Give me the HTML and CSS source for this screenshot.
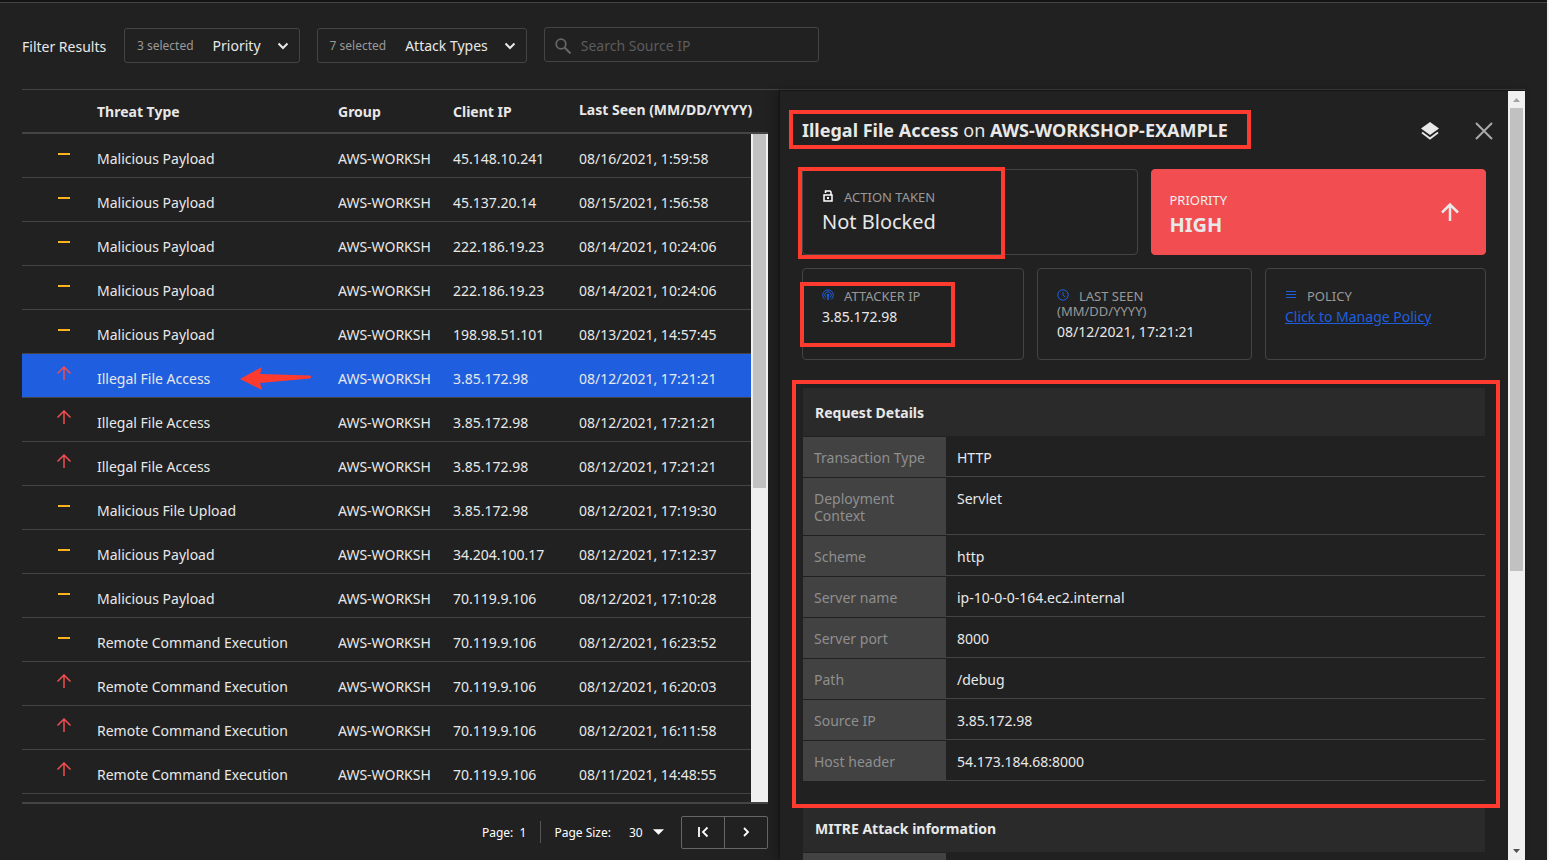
FILE: index.html
```html
<!DOCTYPE html>
<html lang="en">
<head>
  <meta charset="UTF-8">
  <meta name="viewport" content="width=device-width, initial-scale=1.0">
  <title>Threat Events</title>
  <link rel="stylesheet" href="styles.css">
</head>
<body>
  <!-- Shared icons -->
  <svg class="sprite" aria-hidden="true">
    <symbol id="icon-up" viewBox="0 0 16 16">
      <path d="M8 14V1M1.500 7.500L8 1l6.500 6.500" fill="none" stroke="currentColor" stroke-width="1.500"/>
    </symbol>
    <symbol id="icon-dash" viewBox="0 0 16 16">
      <path d="M2 8h12" stroke="currentColor" stroke-width="2"/>
    </symbol>
    <symbol id="icon-chevron" viewBox="0 0 12 12">
      <path d="M1.500 3.500L6 8l4.500-4.500" fill="none" stroke="currentColor" stroke-width="2"/>
    </symbol>
  </svg>

  <div class="page">
    <div class="filters">
      <span class="filters-title">Filter Results</span>
      <button class="dropdown" type="button">
        <span class="count">3 selected</span>
        <span>Priority</span>
        <svg class="chevron"><use href="#icon-chevron"/></svg>
      </button>
      <button class="dropdown" type="button">
        <span class="count">7 selected</span>
        <span>Attack Types</span>
        <svg class="chevron"><use href="#icon-chevron"/></svg>
      </button>
      <label class="search">
        <svg class="search-icon" viewBox="0 0 16 16"><circle cx="6" cy="6" r="4.800" fill="none" stroke="currentColor" stroke-width="1.800"/><path d="M9.500 9.500l6 6" stroke="currentColor" stroke-width="2"/></svg>
        <input type="text" placeholder="Search Source IP" aria-label="Search Source IP">
      </label>
    </div>

    <div class="content">
      <section class="events">
        <div class="events-list">
          <table class="events-table">
            <colgroup>
              <col class="col-icon">
              <col>
              <col class="col-group">
              <col class="col-client">
              <col class="col-seen">
            </colgroup>
            <thead>
              <tr>
                <th></th>
                <th>Threat Type</th>
                <th>Group</th>
                <th>Client IP</th>
                <th class="seen">Last Seen (MM/DD/YYYY)</th>
              </tr>
            </thead>
            <tbody>
              <tr>
                <td class="level medium"><svg><use href="#icon-dash"/></svg></td>
                <td>Malicious Payload</td><td><div class="clip">AWS-WORKSH</div></td><td>45.148.10.241</td><td>08/16/2021, 1:59:58</td>
              </tr>
              <tr>
                <td class="level medium"><svg><use href="#icon-dash"/></svg></td>
                <td>Malicious Payload</td><td><div class="clip">AWS-WORKSH</div></td><td>45.137.20.14</td><td>08/15/2021, 1:56:58</td>
              </tr>
              <tr>
                <td class="level medium"><svg><use href="#icon-dash"/></svg></td>
                <td>Malicious Payload</td><td><div class="clip">AWS-WORKSH</div></td><td>222.186.19.23</td><td>08/14/2021, 10:24:06</td>
              </tr>
              <tr>
                <td class="level medium"><svg><use href="#icon-dash"/></svg></td>
                <td>Malicious Payload</td><td><div class="clip">AWS-WORKSH</div></td><td>222.186.19.23</td><td>08/14/2021, 10:24:06</td>
              </tr>
              <tr>
                <td class="level medium"><svg><use href="#icon-dash"/></svg></td>
                <td>Malicious Payload</td><td><div class="clip">AWS-WORKSH</div></td><td>198.98.51.101</td><td>08/13/2021, 14:57:45</td>
              </tr>
              <tr class="selected">
                <td class="level high"><svg><use href="#icon-up"/></svg></td>
                <td class="pointed">Illegal File Access
                  <svg class="pointer" viewBox="0 0 72 24"><path d="M0 12L22 0l-2 7 50 1.500q2 1.500 0 3L20 16l2 7z" fill="currentColor"/></svg>
                </td><td><div class="clip">AWS-WORKSH</div></td><td>3.85.172.98</td><td>08/12/2021, 17:21:21</td>
              </tr>
              <tr>
                <td class="level high"><svg><use href="#icon-up"/></svg></td>
                <td>Illegal File Access</td><td><div class="clip">AWS-WORKSH</div></td><td>3.85.172.98</td><td>08/12/2021, 17:21:21</td>
              </tr>
              <tr>
                <td class="level high"><svg><use href="#icon-up"/></svg></td>
                <td>Illegal File Access</td><td><div class="clip">AWS-WORKSH</div></td><td>3.85.172.98</td><td>08/12/2021, 17:21:21</td>
              </tr>
              <tr>
                <td class="level medium"><svg><use href="#icon-dash"/></svg></td>
                <td>Malicious File Upload</td><td><div class="clip">AWS-WORKSH</div></td><td>3.85.172.98</td><td>08/12/2021, 17:19:30</td>
              </tr>
              <tr>
                <td class="level medium"><svg><use href="#icon-dash"/></svg></td>
                <td>Malicious Payload</td><td><div class="clip">AWS-WORKSH</div></td><td>34.204.100.17</td><td>08/12/2021, 17:12:37</td>
              </tr>
              <tr>
                <td class="level medium"><svg><use href="#icon-dash"/></svg></td>
                <td>Malicious Payload</td><td><div class="clip">AWS-WORKSH</div></td><td>70.119.9.106</td><td>08/12/2021, 17:10:28</td>
              </tr>
              <tr>
                <td class="level medium"><svg><use href="#icon-dash"/></svg></td>
                <td>Remote Command Execution</td><td><div class="clip">AWS-WORKSH</div></td><td>70.119.9.106</td><td>08/12/2021, 16:23:52</td>
              </tr>
              <tr>
                <td class="level high"><svg><use href="#icon-up"/></svg></td>
                <td>Remote Command Execution</td><td><div class="clip">AWS-WORKSH</div></td><td>70.119.9.106</td><td>08/12/2021, 16:20:03</td>
              </tr>
              <tr>
                <td class="level high"><svg><use href="#icon-up"/></svg></td>
                <td>Remote Command Execution</td><td><div class="clip">AWS-WORKSH</div></td><td>70.119.9.106</td><td>08/12/2021, 16:11:58</td>
              </tr>
              <tr>
                <td class="level high"><svg><use href="#icon-up"/></svg></td>
                <td>Remote Command Execution</td><td><div class="clip">AWS-WORKSH</div></td><td>70.119.9.106</td><td>08/11/2021, 14:48:55</td>
              </tr>
            </tbody>
          </table>
          <div class="list-scroll"><div class="list-thumb"></div></div>
        </div>

        <div class="pager">
          <span class="page-no">Page:&nbsp; 1</span>
          <label class="page-size-label" for="page-size">Page Size:</label>
          <div class="page-size">
            <select id="page-size">
              <option>30</option>
            </select>
            <svg class="caret" viewBox="0 0 12 6"><path d="M0 0h12L6 6z" fill="currentColor"/></svg>
          </div>
          <div class="pager-buttons">
            <button type="button" aria-label="First page"><svg viewBox="0 0 12 12"><path d="M2 1v10M10.500 1.500L6 6l4.500 4.500" fill="none" stroke="currentColor" stroke-width="1.800"/></svg></button>
            <button type="button" aria-label="Next page"><svg viewBox="0 0 12 12"><path d="M4 2l4 4-4 4" fill="none" stroke="currentColor" stroke-width="1.800"/></svg></button>
          </div>
        </div>
      </section>

      <aside class="panel">
        <div class="panel-body">
          <div class="panel-header">
            <h2><b>Illegal File Access</b> on <b>AWS-WORKSHOP-EXAMPLE</b></h2>
            <button class="icon-button" type="button" aria-label="Layers">
              <svg viewBox="0 0 18 18"><path d="M9 0l9 6.500L9 13 0 6.500z" fill="currentColor"/><path d="M1 10.500l8 6 8-6" fill="none" stroke="currentColor" stroke-width="1.800"/></svg>
            </button>
            <button class="icon-button close" type="button" aria-label="Close">
              <svg viewBox="0 0 18 18"><path d="M1 1l16 16M17 1L1 17" stroke="currentColor" stroke-width="2"/></svg>
            </button>
          </div>

          <div class="cards cards-top">
            <div class="card action">
              <p class="card-label">
                <svg class="white" viewBox="0 0 12 12"><path d="M2 5h8v6H2zM3.500 3V1h4.500l1 1v3" fill="none" stroke="currentColor" stroke-width="1.500"/><path d="M5 7h2v2H5z" fill="currentColor"/></svg>ACTION TAKEN</p>
              <p class="big">Not Blocked</p>
            </div>
            <div class="card priority">
              <div class="priority-text">
                <p class="card-label">PRIORITY</p>
                <p class="big">HIGH</p>
              </div>
              <svg class="priority-icon" viewBox="0 0 18 18"><path d="M9 18V2M1 9.500L9 1.500l8 8" fill="none" stroke="currentColor" stroke-width="2.500"/></svg>
            </div>
          </div>

          <div class="cards cards-info">
            <div class="card">
              <p class="card-label">
                <svg viewBox="0 0 12 12"><g fill="none" stroke="currentColor"><path d="M3 10.500a5.300 5.300 0 1 1 6 0"/><path d="M4 8.500a3.200 3.200 0 1 1 4 0"/><path d="M6 6v5" stroke-width="1.500"/></g><circle cx="6" cy="6" r="1.300" fill="currentColor"/></svg>ATTACKER IP</p>
              <p>3.85.172.98</p>
            </div>
            <div class="card">
              <p class="card-label">
                <svg viewBox="0 0 12 12"><circle cx="6" cy="6" r="5.200" fill="none" stroke="currentColor"/><path d="M6 3v3.200l2.500 1.800" fill="none" stroke="currentColor"/></svg>LAST SEEN (MM/DD/YYYY)</p>
              <p>08/12/2021, 17:21:21</p>
            </div>
            <div class="card">
              <p class="card-label">
                <svg viewBox="0 0 12 12"><path d="M1 2.500h10M1 5.500h10M1 8.500h10" stroke="currentColor"/></svg>POLICY</p>
              <p><a href="#">Click to Manage Policy</a></p>
            </div>
          </div>

          <section class="details">
            <h3>Request Details</h3>
            <table>
              <tr><th>Transaction Type</th><td>HTTP</td></tr>
              <tr><th>Deployment Context</th><td>Servlet</td></tr>
              <tr><th>Scheme</th><td>http</td></tr>
              <tr><th>Server name</th><td>ip-10-0-0-164.ec2.internal</td></tr>
              <tr><th>Server port</th><td>8000</td></tr>
              <tr><th>Path</th><td>/debug</td></tr>
              <tr><th>Source IP</th><td>3.85.172.98</td></tr>
              <tr><th>Host header</th><td>54.173.184.68:8000</td></tr>
            </table>
          </section>

          <section class="details">
            <h3>MITRE Attack information</h3>
            <table>
              <tr><th>&nbsp;</th><td></td></tr>
            </table>
          </section>

          <div class="mark mark-title"></div>
          <div class="mark mark-action"></div>
          <div class="mark mark-ip"></div>
          <div class="mark mark-details"></div>
        </div>

        <div class="panel-scroll">
          <svg viewBox="0 0 7 4"><path d="M0 4l3.500-4L7 4z" fill="#a3a3a3"/></svg>
          <div class="panel-track"><div class="panel-thumb"></div></div>
          <svg viewBox="0 0 7 4"><path d="M0 0h7L3.500 4z" fill="#505050"/></svg>
        </div>
      </aside>
    </div>
  </div>
</body>
</html>
```

FILE: styles.css
```css
* {
  box-sizing: border-box;
}

body {
  margin: 0;
  background: #f0f0f0;
  font-family: 'Noto Sans', 'Open Sans', sans-serif;
  font-size: 14px;
  line-height: 20px;
  color: #e8e8e8;
}

h2, h3, p {
  margin: 0;
}

button, input, select {
  font: inherit;
  color: inherit;
  background: none;
  border: none;
  margin: 0;
  padding: 0;
}

button {
  cursor: pointer;
}

.sprite {
  position: absolute;
  width: 0;
  height: 0;
}

.page {
  display: flex;
  flex-direction: column;
  height: 100vh;
  margin-right: 2px;
  padding: 0 22px;
  overflow: hidden;
  background: linear-gradient(#141414 2px, #444 2px, #444 3px, #212121 3px);
}

/* Filters */
.filters {
  display: flex;
  align-items: center;
  padding: 27px 0 26px;
  border-bottom: 1px solid #444;
}

.filters-title {
  width: 102px;
  padding-top: 4px;
}

.dropdown {
  display: flex;
  align-items: center;
  height: 35px;
  margin: 1px 17px 0 0;
  padding: 0 10px 0 12px;
  border: 1px solid #444;
  border-radius: 3px;
}

.count {
  margin-right: 19px;
  font-size: 12px;
  color: #999;
}

.chevron {
  width: 12px;
  height: 12px;
  margin-left: 16px;
}

.search {
  display: flex;
  align-items: center;
  align-self: flex-start;
  width: 275px;
  height: 35px;
  padding: 2px 10px 0;
  border: 1px solid #444;
  border-radius: 3px;
}

.search-icon {
  width: 16px;
  height: 16px;
  margin-right: 10px;
  color: #666;
}

.search input {
  flex: 1;
  min-width: 0;
  outline: none;
}

.search input::placeholder {
  color: #5c5c5c;
}

/* Event list */
.content {
  flex: 1;
  min-height: 0;
  display: grid;
  grid-template-columns: 746fr 745fr;
  gap: 12px;
}

.events {
  display: flex;
  flex-direction: column;
  min-height: 0;
}

.events-list {
  position: relative;
  flex: 1;
  min-height: 0;
  overflow: hidden;
  border-bottom: 2px solid #444;
}

.events-table {
  width: 100%;
  table-layout: fixed;
  border-spacing: 0;
}

.col-icon {
  width: 75px;
}

.col-group {
  width: 115px;
}

.col-client {
  width: 126px;
}

.col-seen {
  width: 189px;
}

.events-table th {
  height: 44px;
  padding: 2px 0 0;
  text-align: left;
  font-weight: 700;
  border-bottom: 2px solid #444;
}

.events-table th.seen {
  white-space: nowrap;
  padding: 0 0 2px;
}

.events-table td {
  height: 44px;
  padding: 7px 0 0;
  white-space: nowrap;
  border-bottom: 1px solid #444;
}

.events-table .level {
  padding: 0 0 4px 34px;
}

.level svg {
  display: block;
  width: 16px;
  height: 16px;
}

.medium {
  color: #fbb321;
}

.high {
  color: #f24d51;
}

.clip {
  margin-right: 23px;
  overflow: hidden;
}

.selected {
  background: #1f5fdf;
}

.pointed {
  position: relative;
}

.pointer {
  position: absolute;
  left: 143px;
  top: 13px;
  width: 72px;
  height: 24px;
  color: #ff3b30;
}

.list-scroll {
  position: absolute;
  top: 44px;
  right: 0;
  bottom: 0;
  width: 17px;
  padding: 0 2px;
  background: #f0f0f0;
}

.list-thumb {
  height: 53%;
  background: #c1c1c1;
}

/* Pager */
.pager {
  display: flex;
  align-items: center;
  justify-content: flex-end;
  height: 56px;
  font-size: 12px;
  color: #fff;
}

.page-no {
  padding: 2px 14px 0 0;
  border-right: 1px solid #555;
}

.page-size-label {
  padding: 2px 0 0 13px;
}

.page-size {
  display: flex;
  align-items: center;
  margin: 0 17px 0 18px;
}

.page-size select {
  width: 24px;
  padding-top: 2px;
  appearance: none;
}

.caret {
  width: 11px;
  height: 6px;
}

.pager-buttons {
  display: flex;
  border: 1px solid #666;
  border-radius: 2px;
}

.pager-buttons button {
  width: 42px;
  height: 31px;
  padding-top: 3px;
}

.pager-buttons button + button {
  width: 43px;
  border-left: 1px solid #666;
}

.pager-buttons svg {
  width: 12px;
  height: 12px;
}

/* Detail panel */
.panel {
  display: flex;
  min-height: 0;
  margin-top: 1px;
  box-shadow: -1px -1px 1px #151515, -4px 0 10px rgba(0, 0, 0, 0.25);
}

.panel-body {
  position: relative;
  flex: 1;
  min-width: 0;
  overflow: hidden;
  padding: 0 22px;
}

.panel-header {
  display: flex;
  align-items: center;
  height: 78px;
  margin-right: -7px;
}

.panel-header h2 {
  flex: 1;
  font-size: 18px;
  font-weight: 400;
}

.panel-header b {
  font-weight: 700;
}

.icon-button {
  width: 18px;
  height: 20px;
  margin-left: 36px;
  padding-top: 2px;
}

.icon-button svg {
  display: block;
  width: 18px;
  height: 18px;
}

.close {
  color: #aaa;
}

.cards {
  display: grid;
  gap: 13px;
}

.cards-top {
  grid-template-columns: 1fr 1fr;
  margin-bottom: 13px;
}

.cards-info {
  grid-template-columns: 222fr 215fr 221fr;
  margin-bottom: 28px;
}

.card {
  min-height: 86px;
  padding: 20px 19px 15px;
  border: 1px solid #444;
  border-radius: 4px;
}

.card-label {
  font-size: 13px;
  line-height: 15px;
  color: #999;
}

.card-label svg {
  width: 12px;
  height: 12px;
  margin-right: 10px;
  color: #1f5fdf;
}

.card-label .white {
  color: #fff;
}

.card a {
  color: #1f5fdf;
}

.big {
  font-size: 20px;
  line-height: 34px;
}

.cards-info .card {
  min-height: 92px;
  padding: 20px 40px 12px 19px;
}

.cards-info p + p {
  line-height: 26px;
  white-space: nowrap;
}

.priority {
  display: flex;
  align-items: center;
  justify-content: space-between;
  padding: 0 26px 0 18px;
  border-color: #f24d51;
  background: #f24d51;
}

.priority-text {
  padding-top: 10px;
}

.priority .card-label {
  color: #f0f0f0;
}

.priority .big {
  font-weight: 700;
}

.priority-icon {
  width: 18px;
  height: 18px;
}

.details {
  margin: 0 1px 22px;
}

.details h3 {
  padding: 15px 12px 13px;
  font-size: 14px;
  font-weight: 700;
  line-height: 20px;
  background: #2a2a2a;
}

.details table {
  width: 100%;
  border-spacing: 0 1px;
}

.details th,
.details td {
  padding: 12px 11px 11px;
  line-height: 17px;
  text-align: left;
  vertical-align: top;
}

.details th {
  width: 143px;
  font-weight: 400;
  color: #8f8f8f;
  background: #424242;
}

.details td {
  padding-bottom: 10px;
  border-bottom: 1px solid #444;
}

/* Highlight boxes over the panel */
.mark {
  position: absolute;
  border: 4px solid #ff3b30;
  pointer-events: none;
}

.mark-title {
  left: 9px;
  top: 19px;
  width: 462px;
  height: 39px;
}

.mark-action {
  left: 18px;
  top: 76px;
  width: 207px;
  height: 92px;
}

.mark-ip {
  left: 20px;
  top: 191px;
  width: 155px;
  height: 65px;
}

.mark-details {
  left: 12px;
  right: 8px;
  top: 289px;
  height: 428px;
}

.panel-scroll {
  display: flex;
  flex-direction: column;
  align-items: center;
  width: 17px;
  padding: 7px 0;
  background: #f0f0f0;
}

.panel-scroll svg {
  width: 7px;
  height: 4px;
}

.panel-track {
  flex: 1;
  width: 13px;
  padding: 6px 0;
}

.panel-thumb {
  height: 63%;
  background: #c1c1c1;
}
```
